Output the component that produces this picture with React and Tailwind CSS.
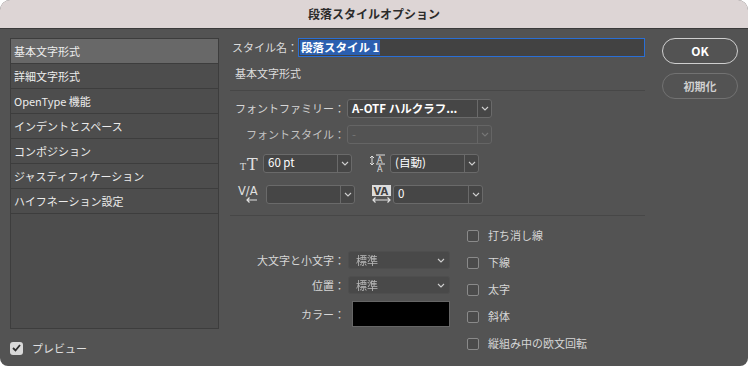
const Chevron = ({ dim }) => (
    <svg width="8" height="5" viewBox="0 0 8 5" className="block">
        <polyline points="1,1 4,4 7,1" fill="none" stroke={dim ? '#777' : '#cfcfcf'} strokeWidth="1.1" />
    </svg>
);

function Combo({ w, text, bold, disabled }) {
    return (
        <div
            className={`flex h-[19px] rounded-[3px] border ${disabled ? 'border-[#656565] bg-[#535353]' : 'border-[#6a6a6a] bg-[#464646]'}`}
            style={{ width: w }}
        >
            <div className={`flex-1 flex items-center px-[4px] text-[11.5px] truncate ${disabled ? 'text-[#777]' : 'text-white'} ${bold ? 'font-bold' : ''}`}>
                {text}
            </div>
            <div className={`w-[14px] flex items-center justify-center border-l ${disabled ? 'border-[#656565]' : 'border-[#6a6a6a]'}`}>
                <Chevron dim={disabled} />
            </div>
        </div>
    );
}

function FlatSelect({ text }) {
    return (
        <div className="ml-[3px] w-[102px] h-[18px] rounded-[3px] bg-[#494949] border border-[#4e4e4e] flex items-center justify-between pl-[7px] pr-[4px]">
            <span className="text-[11px] text-[#b8b8b8] blur-[0.4px]">{text}</span>
            <Chevron />
        </div>
    );
}

function Check({ label }) {
    return (
        <div className="h-[27px] flex items-center">
            <div className="w-[12px] h-[12px] rounded-[2px] border border-[#8a8a8a] bg-[#4b4b4b]" />
            <span className="ml-[9px] text-[11px] text-[#d6d6d6]">{label}</span>
        </div>
    );
}

const SizeIcon = () => (
    <svg width="22" height="18" viewBox="0 0 22 18" overflow="visible">
        <text x="0" y="16" fontSize="9" fill="#e0e0e0" fontFamily="DejaVu Serif">T</text>
        <text x="7" y="16" fontSize="16" fill="#e0e0e0" fontFamily="DejaVu Serif">T</text>
    </svg>
);

const LeadingIcon = () => (
    <svg width="18" height="20" viewBox="0 0 18 20">
        <path d="M3 3 L3 12 M1 5 L3 3 L5 5 M1 10 L3 12 L5 10" fill="none" stroke="#e0e0e0" strokeWidth="1" />
        <line x1="7" y1="2" x2="16" y2="2" stroke="#e0e0e0" strokeWidth="1" />
        <text x="8" y="10" fontSize="8" fill="#e0e0e0" fontFamily="DejaVu Sans">A</text>
        <line x1="7" y1="11" x2="16" y2="11" stroke="#e0e0e0" strokeWidth="1" />
        <text x="8" y="19" fontSize="8" fill="#e0e0e0" fontFamily="DejaVu Sans">A</text>
    </svg>
);

const KernIcon = () => (
    <svg width="22" height="20" viewBox="0 0 22 20" overflow="visible">
        <text x="0" y="11" fontSize="11.5" fill="#e0e0e0" fontFamily="DejaVu Sans">V/A</text>
        <path d="M9 16 L19 16 M11.5 13.5 L9 16 L11.5 18.5" fill="none" stroke="#e0e0e0" strokeWidth="1.2" />
    </svg>
);

const TrackIcon = () => (
    <svg width="20" height="20" viewBox="0 0 20 20">
        <rect x="0" y="1" width="19" height="11" fill="#dcdcdc" />
        <text x="1.5" y="10.5" fontSize="10" fontWeight="bold" fill="#404040" fontFamily="DejaVu Sans">VA</text>
        <path d="M1 16 L18 16 M3.5 13.5 L1 16 L3.5 18.5 M15.5 13.5 L18 16 L15.5 18.5" fill="none" stroke="#e0e0e0" strokeWidth="1.2" />
    </svg>
);

const items = [
    '基本文字形式',
    '詳細文字形式',
    'OpenType 機能',
    'インデントとスペース',
    'コンポジション',
    'ジャスティフィケーション',
    'ハイフネーション設定',
];

export default function App() {
    return (
        <div className="w-[748px] h-[366px] bg-white font-['Noto_Sans_CJK_JP','Noto_Sans',sans-serif]">
            <div className="h-full rounded-t-[10px] rounded-b-[8px] overflow-hidden bg-[#535353] flex flex-col">
                <div className="h-[29px] shrink-0 bg-[#ddd5d5] border-b border-[#3a3a3a] flex items-center justify-center text-[12px] font-bold text-[#2b2b2b]">
                    段落スタイルオプション
                </div>

                <div className="flex-1 flex pt-[9px] pl-[10px]">
                    {/* left list */}
                    <div className="w-[209px]">
                        <div className="h-[291px] border border-[#3d3d3d] bg-[#4d4d4d]">
                            {items.map((t, i) => (
                                <div
                                    key={t}
                                    className={`h-[25px] flex items-center pl-[3px] border-b border-[#3d3d3d] text-[11px] text-[#ececec] ${i === 0 ? 'bg-[#686868]' : ''}`}
                                >
                                    {t}
                                </div>
                            ))}
                        </div>
                        <div className="mt-[11px] flex items-center">
                            <div className="w-[13px] h-[13px] rounded-[3px] bg-[#d9d9d9] flex items-center justify-center">
                                <svg width="9" height="8" viewBox="0 0 9 8">
                                    <polyline points="1,4 3.5,6.5 8,1" fill="none" stroke="#2e2e2e" strokeWidth="1.8" />
                                </svg>
                            </div>
                            <span className="ml-[9px] text-[11px] text-[#e0e0e0]">プレビュー</span>
                        </div>
                    </div>

                    {/* main form */}
                    <div className="ml-[11px] w-[415px]">
                        <div className="h-[19px] flex items-center">
                            <span className="w-[68px] pl-[2px] text-[11px] text-[#dcdcdc]">スタイル名：</span>
                            <div className="flex-1 h-[19px] border border-[#2a6fd6] bg-[#424242] flex items-center pl-[1px]">
                                <span className="bg-[#2b5fb0] px-[1px] text-[11.5px] font-bold text-white leading-[15px]">段落スタイル 1</span>
                            </div>
                        </div>
                        <div className="mt-[8px] h-[16px] pl-[5px] text-[11px] text-[#dcdcdc] flex items-center">基本文字形式</div>
                        <div className="mt-[9px] border-t border-[#474747]" />

                        <div className="mt-[8px] flex items-center">
                            <span className="w-[115px] text-right text-[11px] text-[#d6d6d6]">フォントファミリー：</span>
                            <div className="ml-[2px]"><Combo w={145} text="A-OTF ハルクラフ..." bold /></div>
                        </div>
                        <div className="mt-[7px] flex items-center">
                            <span className="w-[115px] text-right text-[11px] text-[#c4c4c4]">フォントスタイル：</span>
                            <div className="ml-[2px]"><Combo w={145} text="-" disabled /></div>
                        </div>

                        <div className="mt-[9px] flex items-center">
                            <div className="ml-[10px] w-[23px]"><SizeIcon /></div>
                            <Combo w={89} text="60 pt" />
                            <div className="ml-[17px] w-[21px]"><LeadingIcon /></div>
                            <Combo w={89} text="(自動)" />
                        </div>
                        <div className="mt-[11px] flex items-center">
                            <div className="ml-[8px] w-[28px]"><KernIcon /></div>
                            <Combo w={89} text="" />
                            <div className="ml-[17px] w-[21px]"><TrackIcon /></div>
                            <Combo w={90} text="0" />
                        </div>
                        <div className="mt-[11px] border-t border-[#474747]" />

                        <div className="mt-[6px] flex">
                            <div className="w-[237px] pt-[29px]">
                                <div className="flex items-center">
                                    <span className="w-[115px] text-right text-[11px] text-[#d6d6d6]">大文字と小文字：</span>
                                    <FlatSelect text="標準" />
                                </div>
                                <div className="mt-[7px] flex items-center">
                                    <span className="w-[115px] text-right text-[11px] text-[#d6d6d6]">位置：</span>
                                    <FlatSelect text="標準" />
                                </div>
                                <div className="mt-[7px] flex items-center">
                                    <span className="w-[115px] text-right text-[11px] text-[#d6d6d6]">カラー：</span>
                                    <div className="ml-[7px] w-[98px] h-[26px] bg-black border border-[#666]" />
                                </div>
                            </div>
                            <div>
                                <Check label="打ち消し線" />
                                <Check label="下線" />
                                <Check label="太字" />
                                <Check label="斜体" />
                                <Check label="縦組み中の欧文回転" />
                            </div>
                        </div>
                    </div>

                    {/* buttons */}
                    <div className="ml-[17px] w-[76px]">
                        <div className="h-[26px] rounded-full border-[1.5px] border-[#cfcfcf] flex items-center justify-center text-[12px] font-bold text-white">
                            OK
                        </div>
                        <div className="mt-[9px] h-[26px] rounded-full border-[1.5px] border-[#727272] flex items-center justify-center text-[11px] font-bold text-[#cfcfcf]">
                            初期化
                        </div>
                    </div>
                </div>
            </div>
        </div>
    );
}
